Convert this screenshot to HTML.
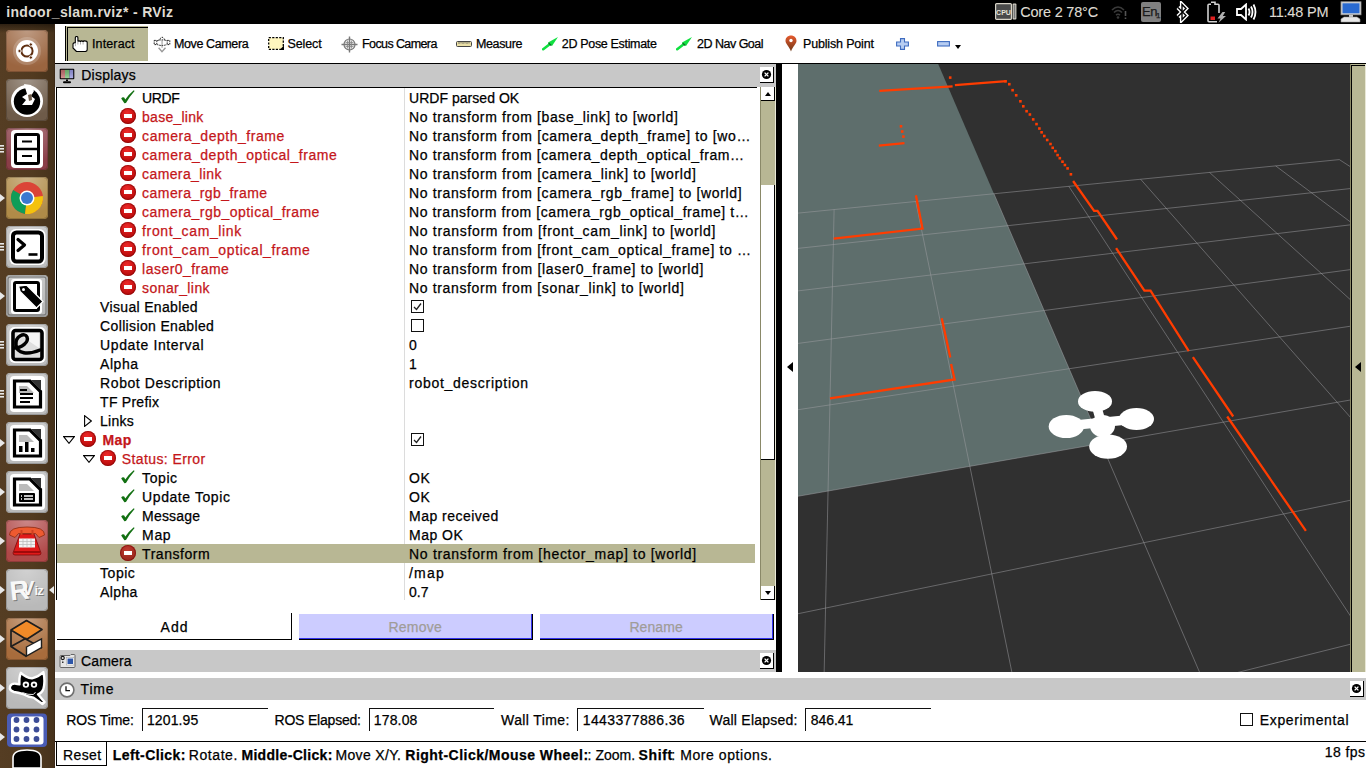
<!DOCTYPE html>
<html><head><meta charset="utf-8">
<style>
*{margin:0;padding:0;box-sizing:border-box}
html,body{width:1366px;height:768px;overflow:hidden;background:#fff;font-family:"Liberation Sans",sans-serif;position:relative}
.a{position:absolute}
.t{position:absolute;white-space:pre;color:#000;-webkit-text-stroke:0.25px currentColor}
.hdr{position:absolute;background:#c8c8c8}
.xb{position:absolute;width:14px;height:16px;background:#fff;border-right:1px solid #000;border-bottom:1px solid #000}
.err{width:16px;height:16px;border-radius:50%;box-shadow:inset 0 0 0 1px rgba(120,0,0,0.55)}
.err i{position:absolute;left:4px;top:6px;width:8px;height:3.5px;background:#fff}
.chk{width:13px;height:13px;border:1px solid #111;background:#fff}
.chk svg{position:absolute;left:0;top:0}
.fld{position:absolute;border-left:1px solid #111;border-top:1px solid #111;height:23px}
</style></head><body>
<!-- top panel -->
<div class="a" style="left:0;top:0;width:1366px;height:24px;background:#000"></div>

<!-- launcher -->
<div class="a" style="left:0;top:24px;width:55px;height:744px;background:linear-gradient(90deg,#553d23,#513a20 60%,#46321b)"></div>
<div class="a" style="left:0;top:24px;width:55px;height:9px;background:linear-gradient(180deg,rgba(0,0,0,0.45),rgba(0,0,0,0))"></div>
<div class="a" style="left:54px;top:24px;width:1px;height:744px;background:#3d2a18"></div>

<!-- toolbar -->
<div class="a" style="left:55px;top:24px;width:1311px;height:39px;background:#fff"></div>
<div class="a" style="left:55px;top:63px;width:1311px;height:1px;background:#000"></div>



<!-- displays header -->
<div class="hdr" style="left:55px;top:64px;width:721px;height:23px"></div>
<div class="xb" style="left:760px;top:67px"><svg width="13" height="15" style="position:absolute;left:0;top:0" viewBox="0 0 13 15"><circle cx="6.5" cy="7.5" r="4.6" fill="#000"/><path d="M4.6 5.6 L8.4 9.4 M8.4 5.6 L4.6 9.4" stroke="#fff" stroke-width="1.3"/></svg></div>

<!-- tree -->
<div class="a" style="left:56px;top:87px;width:701px;height:513px;border-left:1px solid #000;border-top:1px solid #000;background:#fff"></div>
<div class="a" style="left:404px;top:88px;width:1px;height:512px;background:#dcdcdc"></div>

<!-- scrollbar -->
<div class="a" style="left:760px;top:87px;width:16px;height:513px;background:#b8b794;border-left:1px solid #8a8968;border-right:1px solid #e9e8d6"></div>
<div class="a" style="left:761px;top:87px;width:14px;height:14px;background:#fff;border-right:1px solid #000;border-bottom:1px solid #000"></div>
<div class="a" style="left:764.5px;top:92px;width:0;height:0;border-left:3.5px solid transparent;border-right:3.5px solid transparent;border-bottom:4px solid #000"></div>
<div class="a" style="left:761px;top:185px;width:14px;height:275px;background:#fff;border-right:1px solid #000;border-bottom:1px solid #000"></div>
<div class="a" style="left:761px;top:586px;width:14px;height:14px;background:#fff;border-right:1px solid #000;border-bottom:1px solid #000"></div>
<div class="a" style="left:764.5px;top:591px;width:0;height:0;border-left:3.5px solid transparent;border-right:3.5px solid transparent;border-top:4px solid #000"></div>

<!-- splitter -->
<div class="a" style="left:776px;top:64px;width:6px;height:608px;background:#000"></div>
<div class="a" style="left:787px;top:362px;width:0;height:0;border-top:5.5px solid transparent;border-bottom:5.5px solid transparent;border-right:6px solid #000"></div>

<!-- 3d view -->
<div class="a" style="left:798px;top:64px;width:553px;height:608px;background:#303030;overflow:hidden">
<svg class="a" style="left:0;top:0" width="553" height="608" viewBox="0 0 553 608">
<polygon points="0,0 140.2,0 303.3,379.4 0,432.2" fill="#5e6e6c"/>
<path d="M-232.4 172.1L-3771.1 5237.6 M-138.7 162.8L-1895.5 3878.0 M-49.3 154.0L-767.7 3060.5 M36.1 145.5L-14.8 2514.7 M117.8 137.5L523.4 2124.5 M195.9 129.7L927.4 1831.7 M270.8 122.3L1241.8 1603.8 M342.6 115.2L1493.4 1421.4 M411.5 108.4L1699.3 1272.1 M477.7 101.9L1871.0 1147.7 M541.3 95.6L2016.3 1042.4 M-232.4 172.1L541.3 95.6 M-260.6 212.6L581.5 121.4 M-295.3 262.2L628.8 151.7 M-339.0 324.7L685.1 187.9 M-395.5 405.5L753.6 231.8 M-471.5 514.4L838.3 286.2 M-579.3 668.7L946.1 355.4 M-744.2 904.7L1087.6 446.3 M-1027.6 1310.4L1281.9 571.0 M-1629.2 2171.6L1565.1 752.8 M-3771.1 5237.6L2016.3 1042.4" stroke="#a0a0a4" stroke-opacity="0.5" stroke-width="1" fill="none"/>
<path d="M81.3 26.9L154.6 22.4 M156.9 21.2L208.5 17.1 M275.1 117.0L296.1 146.9L299.5 146.9L319.0 175.5 M318.1 184.2L346.4 226.6L352.5 226.6L390.8 287.1 M394.9 293.2L435.2 352.5 M429.2 352.5L507.9 466.8 M80.8 81.6L106.5 79.2 M35.7 174.7L124.5 164.6L117.9 131.2 M143.7 254.3L152.3 293.5 M153.1 300.1L156.6 315.5L32.0 334.4" stroke="#ff3c00" stroke-width="2.3" fill="none" stroke-linejoin="miter"/>
<rect x="150.9" y="12.3" width="2.6" height="2.6" fill="#ff3c00"/>
<rect x="101.7" y="61.0" width="2.6" height="2.6" fill="#ff3c00"/>
<rect x="102.9" y="66.2" width="2.6" height="2.6" fill="#ff3c00"/>
<rect x="104.1" y="71.3" width="2.6" height="2.6" fill="#ff3c00"/>
<rect x="206.2" y="16.0" width="2.6" height="2.6" fill="#ff3c00"/>
<rect x="210.0" y="18.9" width="2.6" height="2.6" fill="#ff3c00"/>
<rect x="213.3" y="24.9" width="2.6" height="2.6" fill="#ff3c00"/>
<rect x="216.9" y="30.0" width="2.6" height="2.6" fill="#ff3c00"/>
<rect x="221.1" y="36.0" width="2.6" height="2.6" fill="#ff3c00"/>
<rect x="224.0" y="41.0" width="2.6" height="2.6" fill="#ff3c00"/>
<rect x="227.3" y="45.9" width="2.6" height="2.6" fill="#ff3c00"/>
<rect x="230.6" y="49.2" width="2.6" height="2.6" fill="#ff3c00"/>
<rect x="233.9" y="54.1" width="2.6" height="2.6" fill="#ff3c00"/>
<rect x="237.2" y="58.8" width="2.6" height="2.6" fill="#ff3c00"/>
<rect x="240.1" y="63.2" width="2.6" height="2.6" fill="#ff3c00"/>
<rect x="242.3" y="67.0" width="2.6" height="2.6" fill="#ff3c00"/>
<rect x="245.0" y="70.7" width="2.6" height="2.6" fill="#ff3c00"/>
<rect x="247.9" y="74.7" width="2.6" height="2.6" fill="#ff3c00"/>
<rect x="251.2" y="78.7" width="2.6" height="2.6" fill="#ff3c00"/>
<rect x="253.4" y="82.5" width="2.6" height="2.6" fill="#ff3c00"/>
<rect x="256.1" y="85.8" width="2.6" height="2.6" fill="#ff3c00"/>
<rect x="258.3" y="89.8" width="2.6" height="2.6" fill="#ff3c00"/>
<rect x="260.5" y="92.9" width="2.6" height="2.6" fill="#ff3c00"/>
<rect x="263.2" y="96.4" width="2.6" height="2.6" fill="#ff3c00"/>
<rect x="265.6" y="99.7" width="2.6" height="2.6" fill="#ff3c00"/>
<rect x="268.3" y="103.1" width="2.6" height="2.6" fill="#ff3c00"/>
<rect x="271.6" y="109.0" width="2.6" height="2.6" fill="#ff3c00"/>
<g fill="#fff"><ellipse cx="297" cy="337.4" rx="17" ry="10.3"/><ellipse cx="338.5" cy="355" rx="17.5" ry="11.1"/><ellipse cx="268.29999999999995" cy="362.5" rx="17.6" ry="11.5"/><ellipse cx="310.0999999999999" cy="382.6" rx="18.9" ry="12.1"/><ellipse cx="304.5" cy="362" rx="12.5" ry="11"/><path d="M297.0 337.0L310.0 382.0M268.0 362.0L338.0 355.0" stroke="#fff" stroke-width="9.5"/></g>
</svg>
</div>
<div class="a" style="left:1350px;top:64px;width:16px;height:608px;background:#b8b794;border-left:1px solid #8c8a68;border-right:1px solid #e9e8d6"></div>
<div class="a" style="left:1351px;top:65px;width:14px;height:607px;border-left:1px solid #000;border-top:1px solid #000"></div>
<div class="a" style="left:1355px;top:362px;width:0;height:0;border-top:5.5px solid transparent;border-bottom:5.5px solid transparent;border-right:6px solid #000"></div>

<div class="a" style="left:57px;top:544px;width:698px;height:19px;background:#b8b794"></div>
<svg class="a" style="left:121px;top:90px" width="14" height="14" viewBox="0 0 14 14"><path d="M0.2 8.6 Q1.4 6.6 3.2 7.6 L4.3 9.6 Q8 4 12.8 0.2 L13.6 1 Q9 6 5 13 L3.4 13.2 Z" fill="#127012"/></svg>
<div class="a err" style="left:120px;top:108px;background:radial-gradient(circle at 45% 30%,#ee2a2a,#c41010 60%,#a00808)"><i></i></div>
<div class="a err" style="left:120px;top:127px;background:radial-gradient(circle at 45% 30%,#ee2a2a,#c41010 60%,#a00808)"><i></i></div>
<div class="a err" style="left:120px;top:146px;background:radial-gradient(circle at 45% 30%,#ee2a2a,#c41010 60%,#a00808)"><i></i></div>
<div class="a err" style="left:120px;top:165px;background:radial-gradient(circle at 45% 30%,#ee2a2a,#c41010 60%,#a00808)"><i></i></div>
<div class="a err" style="left:120px;top:184px;background:radial-gradient(circle at 45% 30%,#ee2a2a,#c41010 60%,#a00808)"><i></i></div>
<div class="a err" style="left:120px;top:203px;background:radial-gradient(circle at 45% 30%,#ee2a2a,#c41010 60%,#a00808)"><i></i></div>
<div class="a err" style="left:120px;top:222px;background:radial-gradient(circle at 45% 30%,#ee2a2a,#c41010 60%,#a00808)"><i></i></div>
<div class="a err" style="left:120px;top:241px;background:radial-gradient(circle at 45% 30%,#ee2a2a,#c41010 60%,#a00808)"><i></i></div>
<div class="a err" style="left:120px;top:260px;background:radial-gradient(circle at 45% 30%,#ee2a2a,#c41010 60%,#a00808)"><i></i></div>
<div class="a err" style="left:120px;top:279px;background:radial-gradient(circle at 45% 30%,#ee2a2a,#c41010 60%,#a00808)"><i></i></div>
<div class="a chk" style="left:411px;top:300px"><svg width="11" height="11" viewBox="0 0 11 11"><path d="M2 6 L4.5 8.5 L9 2.5" fill="none" stroke="#222" stroke-width="1.3"/></svg></div>
<div class="a chk" style="left:411px;top:319px"></div>
<svg class="a" style="left:84px;top:415px" width="8" height="12" viewBox="0 0 8 12"><path d="M0.6 0.6 L7.3 6 L0.6 11.4 Z" fill="none" stroke="#000" stroke-width="1.1"/></svg>
<div class="a err" style="left:80px;top:431px;background:radial-gradient(circle at 45% 30%,#ee2a2a,#c41010 60%,#a00808)"><i></i></div>
<svg class="a" style="left:63px;top:436px" width="12" height="8" viewBox="0 0 12 8"><path d="M0.6 0.6 L11.4 0.6 L6 7.3 Z" fill="none" stroke="#000" stroke-width="1.1"/></svg>
<div class="a chk" style="left:411px;top:433px"><svg width="11" height="11" viewBox="0 0 11 11"><path d="M2 6 L4.5 8.5 L9 2.5" fill="none" stroke="#222" stroke-width="1.3"/></svg></div>
<div class="a err" style="left:100px;top:450px;background:radial-gradient(circle at 45% 30%,#ee2a2a,#c41010 60%,#a00808)"><i></i></div>
<svg class="a" style="left:83px;top:455px" width="12" height="8" viewBox="0 0 12 8"><path d="M0.6 0.6 L11.4 0.6 L6 7.3 Z" fill="none" stroke="#000" stroke-width="1.1"/></svg>
<svg class="a" style="left:121px;top:470px" width="14" height="14" viewBox="0 0 14 14"><path d="M0.2 8.6 Q1.4 6.6 3.2 7.6 L4.3 9.6 Q8 4 12.8 0.2 L13.6 1 Q9 6 5 13 L3.4 13.2 Z" fill="#127012"/></svg>
<svg class="a" style="left:121px;top:489px" width="14" height="14" viewBox="0 0 14 14"><path d="M0.2 8.6 Q1.4 6.6 3.2 7.6 L4.3 9.6 Q8 4 12.8 0.2 L13.6 1 Q9 6 5 13 L3.4 13.2 Z" fill="#127012"/></svg>
<svg class="a" style="left:121px;top:508px" width="14" height="14" viewBox="0 0 14 14"><path d="M0.2 8.6 Q1.4 6.6 3.2 7.6 L4.3 9.6 Q8 4 12.8 0.2 L13.6 1 Q9 6 5 13 L3.4 13.2 Z" fill="#127012"/></svg>
<svg class="a" style="left:121px;top:527px" width="14" height="14" viewBox="0 0 14 14"><path d="M0.2 8.6 Q1.4 6.6 3.2 7.6 L4.3 9.6 Q8 4 12.8 0.2 L13.6 1 Q9 6 5 13 L3.4 13.2 Z" fill="#127012"/></svg>
<div class="a err" style="left:120px;top:545px;background:radial-gradient(circle at 45% 30%,#c03a30,#a02a20 60%,#882018)"><i></i></div>

<!-- buttons -->
<div class="a" style="left:57px;top:613px;width:235px;height:27px;border-right:1px solid #000;border-bottom:1px solid #000"></div>
<div class="a" style="left:299px;top:614px;width:234px;height:26px;background:#ccccff;border-right:1px solid #000;border-bottom:1px solid #000;box-shadow:inset -1px -1px 0 #3333ee"></div>
<div class="a" style="left:540px;top:614px;width:234px;height:26px;background:#ccccff;border-right:1px solid #000;border-bottom:1px solid #000;box-shadow:inset -1px -1px 0 #3333ee"></div>

<!-- camera header -->
<div class="hdr" style="left:55px;top:650px;width:721px;height:22px"></div>
<div class="xb" style="left:760px;top:653px"><svg width="13" height="15" style="position:absolute;left:0;top:0" viewBox="0 0 13 15"><circle cx="6.5" cy="7.5" r="4.6" fill="#000"/><path d="M4.6 5.6 L8.4 9.4 M8.4 5.6 L4.6 9.4" stroke="#fff" stroke-width="1.3"/></svg></div>

<!-- time header -->
<div class="hdr" style="left:55px;top:678px;width:1311px;height:22px"></div>
<div class="xb" style="left:1350px;top:681px"><svg width="13" height="15" style="position:absolute;left:0;top:0" viewBox="0 0 13 15"><circle cx="6.5" cy="7.5" r="4.6" fill="#000"/><path d="M4.6 5.6 L8.4 9.4 M8.4 5.6 L4.6 9.4" stroke="#fff" stroke-width="1.3"/></svg></div>

<!-- time fields -->
<div class="fld" style="left:142px;top:708px;width:126px"></div>
<div class="fld" style="left:369px;top:708px;width:125px"></div>
<div class="fld" style="left:577px;top:708px;width:127px"></div>
<div class="fld" style="left:805px;top:708px;width:126px"></div>
<div class="a chk" style="left:1240px;top:713px"></div>

<!-- status -->
<div class="a" style="left:55px;top:741px;width:1311px;height:1px;background:#000"></div>
<div class="a" style="left:56px;top:742px;width:51px;height:24px;border-left:1px solid #000;border-right:1px solid #000;border-bottom:1px solid #000"></div>

<svg class="a" style="left:0;top:24px" width="55" height="744" viewBox="0 24 55 744">
<defs>
<radialGradient id="shine" cx="0.5" cy="0" r="0.9"><stop offset="0" stop-color="#fff" stop-opacity="0.35"/><stop offset="1" stop-color="#fff" stop-opacity="0"/></radialGradient>
<linearGradient id="gray" x1="0" y1="0" x2="0" y2="1"><stop offset="0" stop-color="#d2d2d2"/><stop offset="1" stop-color="#a8a8a8"/></linearGradient>
</defs>
<rect x="6" y="30" width="42" height="42" rx="4" fill="#9b6540"/>
<rect x="6" y="30" width="42" height="42" rx="4" fill="url(#shine)"/>
<rect x="6.5" y="30.5" width="41" height="41" rx="4" fill="none" stroke="#000" stroke-opacity="0.18"/>
<circle cx="27" cy="51" r="14" fill="#fff" fill-opacity="0.18"/>
<circle cx="27" cy="51" r="11" fill="#fff"/>
<circle cx="27" cy="51" r="5.6" fill="none" stroke="#5e2e10" stroke-width="2"/>
<circle cx="30.8" cy="44.5" r="1.7" fill="#5e2e10" stroke="#fff" stroke-width="1"/>
<circle cx="19.5" cy="51.0" r="1.7" fill="#5e2e10" stroke="#fff" stroke-width="1"/>
<circle cx="30.8" cy="57.5" r="1.7" fill="#5e2e10" stroke="#fff" stroke-width="1"/>
<rect x="6" y="79" width="42" height="42" rx="4" fill="#6e5b49"/>
<rect x="6" y="79" width="42" height="42" rx="4" fill="url(#shine)"/>
<rect x="6.5" y="79.5" width="41" height="41" rx="4" fill="none" stroke="#000" stroke-opacity="0.18"/>
<circle cx="27" cy="101" r="16" fill="#fff"/>
<circle cx="27" cy="101.5" r="13.2" fill="#000"/>
<path d="M24 84 L31 85 L34 91 L31 96 L35 99 L32 105 L22 105 L26 100 L22 97 L27 94 Z" fill="#fff"/>
<path d="M28 95 L31.5 94 L32 100 L29 101 Z" fill="#6e5b49"/>
<rect x="6" y="128" width="42" height="42" rx="4" fill="#8a3e47"/>
<rect x="6" y="128" width="42" height="42" rx="4" fill="url(#shine)"/>
<rect x="6.5" y="128.5" width="41" height="41" rx="4" fill="none" stroke="#000" stroke-opacity="0.18"/>
<rect x="11" y="130" width="32" height="38" rx="4" fill="#fff"/>
<rect x="15.5" y="134.5" width="23" height="29" rx="1.5" fill="none" stroke="#000" stroke-width="3"/>
<path d="M15 149H39" stroke="#000" stroke-width="2.5"/>
<path d="M22 141.5H32M22 156H32" stroke="#000" stroke-width="2"/>
<rect x="0" y="145" width="4" height="1.6" fill="#e8e8e8"/>
<rect x="0" y="148" width="4" height="1.6" fill="#e8e8e8"/>
<rect x="0" y="151" width="4" height="1.6" fill="#e8e8e8"/>
<rect x="6" y="177" width="42" height="42" rx="4" fill="#b08b48"/>
<rect x="6" y="177" width="42" height="42" rx="4" fill="url(#shine)"/>
<rect x="6.5" y="177.5" width="41" height="41" rx="4" fill="none" stroke="#000" stroke-opacity="0.18"/>
<circle cx="27" cy="198" r="16" fill="#db4437"/>
<path d="M27 198 L13.1 190 A16 16 0 0 0 25 213.9 Z" fill="#0f9d58"/>
<path d="M27 198 L42.9 196 A16 16 0 0 1 25 213.9 Z" fill="#f4c20d"/>
<circle cx="27" cy="198" r="7.5" fill="#fff"/>
<circle cx="27" cy="198" r="6" fill="#3b78d0"/>
<path d="M0 194L5 198L0 202Z" fill="#e8e8e8"/>
<rect x="6" y="226" width="42" height="42" rx="4" fill="#bdbdbd"/>
<rect x="6" y="226" width="42" height="42" rx="4" fill="url(#shine)"/>
<rect x="6.5" y="226.5" width="41" height="41" rx="4" fill="none" stroke="#000" stroke-opacity="0.18"/>
<rect x="9.5" y="229" width="36" height="36" rx="6" fill="#fff"/>
<rect x="13" y="232.5" width="29" height="29" rx="3.5" fill="none" stroke="#000" stroke-width="4"/>
<path d="M18 239.5L24.5 245L18 250.5" fill="none" stroke="#000" stroke-width="3.2" stroke-linecap="round" stroke-linejoin="round"/>
<path d="M28.5 254.5H37.5" stroke="#000" stroke-width="2.6"/>
<rect x="0" y="243" width="4" height="1.6" fill="#e8e8e8"/>
<rect x="0" y="246" width="4" height="1.6" fill="#e8e8e8"/>
<rect x="0" y="249" width="4" height="1.6" fill="#e8e8e8"/>
<rect x="6" y="275" width="42" height="42" rx="4" fill="#b8b8b8"/>
<rect x="6" y="275" width="42" height="42" rx="4" fill="url(#shine)"/>
<rect x="6.5" y="275.5" width="41" height="41" rx="4" fill="none" stroke="#000" stroke-opacity="0.18"/>
<rect x="8" y="277" width="38" height="38" rx="2" fill="none" stroke="#666" stroke-width="1"/>
<rect x="11" y="279" width="31" height="35" rx="3" fill="#fff"/>
<rect x="14.5" y="282.5" width="24" height="28" rx="1.5" fill="none" stroke="#000" stroke-width="3"/>
<path d="M18.5 286 L26.5 285 L43 301.5 L36.5 308 L20 291.5 Z" fill="#000" stroke="#fff" stroke-width="1.3" stroke-linejoin="round"/>
<circle cx="23.5" cy="289.5" r="1.5" fill="#fff"/>
<path d="M0 292L5 296L0 300Z" fill="#e8e8e8"/>
<rect x="6" y="324" width="42" height="42" rx="4" fill="#bcbcbc"/>
<rect x="6" y="324" width="42" height="42" rx="4" fill="url(#shine)"/>
<rect x="6.5" y="324.5" width="41" height="41" rx="4" fill="none" stroke="#000" stroke-opacity="0.18"/>
<rect x="9.5" y="327" width="36" height="36" rx="5" fill="#fff"/>
<rect x="13" y="330.5" width="29" height="29" rx="2.5" fill="#dedede" stroke="#000" stroke-width="3.6"/>
<path d="M17 333 H39 V348 Z" fill="#fff" fill-opacity="0.7"/>
<path d="M14 348 C22 348 29 342 27 337 C25 332 15 336 16 345 C17 354 28 355 40 350" fill="none" stroke="#000" stroke-width="3.4" stroke-linecap="round"/>
<rect x="0" y="341" width="4" height="1.6" fill="#e8e8e8"/>
<rect x="0" y="344" width="4" height="1.6" fill="#e8e8e8"/>
<rect x="0" y="347" width="4" height="1.6" fill="#e8e8e8"/>
<rect x="6" y="373" width="42" height="42" rx="4" fill="#bababa"/>
<rect x="6" y="373" width="42" height="42" rx="4" fill="url(#shine)"/>
<rect x="6.5" y="373.5" width="41" height="41" rx="4" fill="none" stroke="#000" stroke-opacity="0.18"/>
<rect x="10" y="376" width="35" height="36" rx="4" fill="#fff"/>
<path d="M14.5 381 H30 L40.5 391.5 V407 H14.5 Z" fill="#fff" stroke="#000" stroke-width="3.2"/>
<path d="M31 380 L41 380 L41 390 Z" fill="#333"/>
<path d="M19 386 H27 L34 393 V393 H19 Z" fill="#bbb"/>
<path d="M20 390H27M20 394H33M20 398H33M20 402H30" stroke="#000" stroke-width="2"/>
<rect x="0" y="390" width="4" height="1.6" fill="#e8e8e8"/>
<rect x="0" y="393" width="4" height="1.6" fill="#e8e8e8"/>
<rect x="0" y="396" width="4" height="1.6" fill="#e8e8e8"/>
<rect x="6" y="422" width="42" height="42" rx="4" fill="#bababa"/>
<rect x="6" y="422" width="42" height="42" rx="4" fill="url(#shine)"/>
<rect x="6.5" y="422.5" width="41" height="41" rx="4" fill="none" stroke="#000" stroke-opacity="0.18"/>
<rect x="10" y="425" width="35" height="36" rx="4" fill="#fff"/>
<path d="M14.5 430 H30 L40.5 440.5 V456 H14.5 Z" fill="#fff" stroke="#000" stroke-width="3.2"/>
<path d="M31 429 L41 429 L41 439 Z" fill="#333"/>
<path d="M19 435 H27 L34 442 V442 H19 Z" fill="#bbb"/>
<rect x="19" y="446" width="3.5" height="6" fill="#000"/><rect x="25" y="442" width="3.5" height="10" fill="#000"/><rect x="31" y="448" width="3.5" height="4" fill="#000"/>
<path d="M0 439L5 443L0 447Z" fill="#e8e8e8"/>
<rect x="6" y="471" width="42" height="42" rx="4" fill="#bababa"/>
<rect x="6" y="471" width="42" height="42" rx="4" fill="url(#shine)"/>
<rect x="6.5" y="471.5" width="41" height="41" rx="4" fill="none" stroke="#000" stroke-opacity="0.18"/>
<rect x="10" y="474" width="35" height="36" rx="4" fill="#fff"/>
<path d="M14.5 479 H30 L40.5 489.5 V505 H14.5 Z" fill="#fff" stroke="#000" stroke-width="3.2"/>
<path d="M31 478 L41 478 L41 488 Z" fill="#333"/>
<path d="M19 484 H27 L34 491 V491 H19 Z" fill="#bbb"/>
<rect x="19" y="493" width="16" height="9" rx="1" fill="#000"/><path d="M24 496H33M24 499H33M21 496H22M21 499H22" stroke="#fff" stroke-width="1.3"/>
<path d="M0 488L5 492L0 496Z" fill="#e8e8e8"/>
<rect x="6" y="520" width="42" height="42" rx="4" fill="#b04848"/>
<rect x="6" y="520" width="42" height="42" rx="4" fill="url(#shine)"/>
<rect x="6.5" y="520.5" width="41" height="41" rx="4" fill="none" stroke="#000" stroke-opacity="0.18"/>
<path d="M20 534 L34 534 L41 553 Q41 555 39 555 L15 555 Q13 555 13 553 Z" fill="#e01a1a" stroke="#7a0a0a" stroke-width="0.8"/>
<path d="M9.5 535 Q9 527 27 527 Q45 527 44.5 535 L39 537.5 L35.5 533.5 L18.5 533.5 L15 537.5 Z" fill="#ee5a30" stroke="#8a2a10" stroke-width="0.8"/>
<rect x="20.5" y="530" width="2" height="5" fill="#d04020"/><rect x="31.5" y="530" width="2" height="5" fill="#d04020"/>
<rect x="19" y="538.5" width="16" height="9" fill="#f2f2f2"/>
<path d="M19 541.5 H35 M19 544.5 H35 M23 538.5 V547.5 M27 538.5 V547.5 M31 538.5 V547.5" stroke="#b8b8b8" stroke-width="0.7"/>
<path d="M14 552 H40" stroke="#a00a0a" stroke-width="2"/>
<path d="M0 537L5 541L0 545Z" fill="#e8e8e8"/>
<rect x="6" y="569" width="42" height="42" rx="4" fill="#b9b9b9"/>
<rect x="6" y="569" width="42" height="42" rx="4" fill="url(#shine)"/>
<rect x="6.5" y="569.5" width="41" height="41" rx="4" fill="none" stroke="#000" stroke-opacity="0.18"/>
<g font-family="Liberation Sans" font-weight="bold" fill="#7a7a7a"><text x="10.5" y="601" font-size="27" transform="rotate(-6 15 589)">R</text><text x="22" y="596" font-size="20">V</text><text x="35.5" y="596" font-size="13" letter-spacing="-0.8">iz</text></g>
<g font-family="Liberation Sans" font-weight="bold" fill="#f8f8f8"><text x="9.5" y="600" font-size="27" transform="rotate(-6 15 589)">R</text><text x="21" y="595" font-size="20">V</text><text x="34.5" y="595" font-size="13" letter-spacing="-0.8">iz</text></g>
<path d="M0 586L5 590L0 594Z" fill="#e8e8e8"/>
<path d="M54 586L49 590L54 594Z" fill="#e8e8e8"/>
<rect x="6" y="618" width="42" height="42" rx="4" fill="#a86c3c"/>
<rect x="6" y="618" width="42" height="42" rx="4" fill="url(#shine)"/>
<rect x="6.5" y="618.5" width="41" height="41" rx="4" fill="none" stroke="#000" stroke-opacity="0.18"/>
<path d="M11 630 L26.5 620.5 L42 629.5 L26.5 639.5 Z" fill="#f08a28"/>
<path d="M11 630 L26.5 620.5 L42 629.5 L26.5 639.5 Z M11 630 V646.5 L26.5 656.5 M26.5 639.5 L42 648 M11 646.5 L26.5 638" fill="none" stroke="#1e1e1e" stroke-width="1.7" stroke-linejoin="round"/>
<path d="M26.5 647 L41.5 639 V647.5 L26.5 656 Z" fill="#fff" stroke="#1e1e1e" stroke-width="1.4"/>
<path d="M0 635L5 639L0 643Z" fill="#e8e8e8"/>
<rect x="6" y="667" width="42" height="42" rx="4" fill="#b9b9b9"/>
<rect x="6" y="667" width="42" height="42" rx="4" fill="url(#shine)"/>
<rect x="6.5" y="667.5" width="41" height="41" rx="4" fill="none" stroke="#000" stroke-opacity="0.18"/>
<path d="M20.9 672.8 Q26 677.5 32 678.4 Q38 677 43.4 672.1 Q45.5 682 43.4 689 Q41.5 693.5 38 694.3 L44.6 702 L42.4 704 L33.5 697.6 Q28 697 22.8 694 Q18 692.5 14 692 Q9 690.5 10 686.5 Q11.5 682.5 17.5 684 L19.4 684.4 Q19 677 20.9 672.8 Z" fill="#000" stroke="#fff" stroke-width="2.4" stroke-linejoin="round"/>
<circle cx="25.9" cy="684.6" r="3.2" fill="#fff"/><circle cx="34" cy="684.6" r="3.2" fill="#fff"/>
<circle cx="25.9" cy="684.8" r="1.4" fill="#000"/><circle cx="34" cy="684.8" r="1.4" fill="#000"/>
<path d="M22.5 692.6 Q28 695 33.5 694.5" fill="none" stroke="#fff" stroke-width="0.9"/>
<path d="M33.5 694 L35.5 692.5" stroke="#fff" stroke-width="1"/>
<path d="M0 684L5 688L0 692Z" fill="#e8e8e8"/>
<rect x="7" y="713.5" width="40" height="33.5" rx="4" fill="#4a5cb4"/>
<rect x="11" y="716.5" width="32.5" height="28" rx="3" fill="#fff"/>
<circle cx="16.5" cy="720.0" r="2.9" fill="#3c4c96"/>
<circle cx="16.5" cy="729.5" r="2.9" fill="#3c4c96"/>
<circle cx="16.5" cy="739.0" r="2.9" fill="#3c4c96"/>
<circle cx="26.5" cy="720.0" r="2.9" fill="#3c4c96"/>
<circle cx="26.5" cy="729.5" r="2.9" fill="#3c4c96"/>
<circle cx="26.5" cy="739.0" r="2.9" fill="#3c4c96"/>
<circle cx="36.5" cy="720.0" r="2.9" fill="#3c4c96"/>
<circle cx="36.5" cy="729.5" r="2.9" fill="#3c4c96"/>
<circle cx="36.5" cy="739.0" r="2.9" fill="#3c4c96"/>
<path d="M13 758 Q13 750 27 750 Q41 750 41 758 V768 H13 Z" fill="#000" stroke="#fff" stroke-width="1.6"/>
<path d="M0 733L5 737L0 741Z" fill="#e8e8e8"/>
</svg>
<div class="a" style="left:65px;top:26px;width:83px;height:35px;background:#b8b794"></div>
<div class="a" style="left:65px;top:26px;width:1px;height:35px;background:#000"></div>
<div class="a" style="left:67px;top:27px;width:81px;height:34px;border-left:1px solid #000;border-top:1px solid #000"></div>
<svg class="a" style="left:72px;top:36px" width="16" height="16" viewBox="0 0 16 16"><path d="M4.5 15.5 L1 12 V8.2 Q1 6.6 3.3 6.6 V1.8 Q3.3 0.5 4.6 0.5 Q5.9 0.5 5.9 1.8 V5.6 Q6 4.9 7.2 4.9 Q8.5 4.9 8.5 5.9 Q8.6 4.9 9.8 4.9 Q11.1 4.9 11.1 5.9 Q11.2 4.9 12.4 4.9 Q15.2 4.9 15.2 6.6 V13.5 Q15.2 15.5 13.2 15.5 Z" fill="#fff" stroke="#000" stroke-width="1.1"/><path d="M3.4 7.2 V10.2 M5.9 5.8 V8.5 M8.5 6 V8.5 M11.1 6 V8.5" stroke="#888" stroke-width="0.7"/></svg>
<svg class="a" style="left:153px;top:36px" width="18" height="17" viewBox="0 0 18 17"><rect x="8.2" y="4" width="1.8" height="8" fill="#c4c4c4"/><path d="M5.3 4.4 L9 0.9 L12.8 4.4 M3.8 4.8 Q9 2.8 14.2 4.8 M3.8 8.4 Q9 10.6 14.2 8.4" fill="none" stroke="#222" stroke-width="1" stroke-dasharray="1.6 0.9"/><rect x="1.2" y="4.4" width="2.6" height="4.2" fill="#fff" stroke="#222" stroke-width="1" stroke-dasharray="1.6 0.9"/><rect x="14.2" y="4.4" width="2.6" height="4.2" fill="#fff" stroke="#222" stroke-width="1" stroke-dasharray="1.6 0.9"/><path d="M5.6 11.8 L9 15.6 L12.5 11.8" fill="#fff" stroke="#999" stroke-width="1.4"/></svg>
<svg class="a" style="left:268px;top:37px" width="16" height="13" viewBox="0 0 16 13"><rect x="0.7" y="0.7" width="14.6" height="11.6" fill="#fff6bf" stroke="#000" stroke-width="1.3" stroke-dasharray="2.2 1.3"/><path d="M16 8.5 V13 H11.5 Z" fill="#000"/></svg>
<svg class="a" style="left:341px;top:36px" width="17" height="17" viewBox="0 0 17 17"><circle cx="8.5" cy="8.5" r="5.5" fill="#eee" stroke="#777" stroke-width="1.2"/><path d="M8.5 0.5 V16.5 M0.5 8.5 H16.5" stroke="#777" stroke-width="1.4"/><path d="M4.5 6.5 H12.5 M4.5 10.5 H12.5 M6.5 4.5 V12.5 M10.5 4.5 V12.5" stroke="#888" stroke-width="0.8"/></svg>
<svg class="a" style="left:456px;top:41px" width="16" height="6" viewBox="0 0 16 6"><rect x="0.5" y="0.5" width="15" height="5" rx="1" fill="#eadfa6" stroke="#444" stroke-width="1"/><path d="M3 1 V3 M5 1 V2.5 M7 1 V3 M9 1 V2.5 M11 1 V3 M13 1 V2.5" stroke="#555" stroke-width="0.8"/></svg>
<svg class="a" style="left:541.5px;top:36px" width="17" height="15" viewBox="0 0 17 15"><path d="M1.2 13.2 L8 8" stroke="#10e040" stroke-width="2.6" stroke-linecap="round"/><path d="M6 6.5 L16 1 L10 10 Z" fill="#10e040"/><path d="M6.5 7 L9.3 9.5" stroke="#066a20" stroke-width="1.2"/></svg>
<svg class="a" style="left:676.4px;top:36px" width="17" height="15" viewBox="0 0 17 15"><path d="M1.2 13.2 L8 8" stroke="#10e040" stroke-width="2.6" stroke-linecap="round"/><path d="M6 6.5 L16 1 L10 10 Z" fill="#10e040"/><path d="M6.5 7 L9.3 9.5" stroke="#066a20" stroke-width="1.2"/></svg>
<svg class="a" style="left:785px;top:35px" width="12" height="17" viewBox="0 0 12 17"><defs><linearGradient id="pg" x1="0" y1="0" x2="0" y2="1"><stop offset="0" stop-color="#e65a2e"/><stop offset="1" stop-color="#6e3818"/></linearGradient></defs><path d="M6 16.5 C4 11 0.5 9 0.5 5.8 C0.5 2.6 3 0.5 6 0.5 C9 0.5 11.5 2.6 11.5 5.8 C11.5 9 8 11 6 16.5 Z" fill="url(#pg)"/><circle cx="6" cy="5.5" r="1.7" fill="#fff"/></svg>
<svg class="a" style="left:896px;top:38px" width="13" height="12" viewBox="0 0 13 12"><path d="M4.5 0.6 H8.5 V4 H12.4 V8 H8.5 V11.4 H4.5 V8 H0.6 V4 H4.5 Z" fill="#b7cdf2" stroke="#3f6cc0" stroke-width="1.1"/></svg>
<svg class="a" style="left:937px;top:41px" width="13" height="6" viewBox="0 0 13 6"><rect x="0.6" y="0.6" width="11.8" height="4.4" fill="#b7cdf2" stroke="#3f6cc0" stroke-width="1.1"/></svg>
<div class="a" style="left:955px;top:44.5px;width:0;height:0;border-left:3.5px solid transparent;border-right:3.5px solid transparent;border-top:4.5px solid #000"></div>
<svg class="a" style="left:59px;top:68px" width="16" height="16" viewBox="0 0 16 16"><defs><linearGradient id="mg" x1="0" y1="0" x2="0" y2="1"><stop offset="0" stop-color="#000" stop-opacity="0.15"/><stop offset="1" stop-color="#fff" stop-opacity="0.25"/></linearGradient></defs><rect x="0.7" y="0.7" width="14.6" height="10.6" rx="1" fill="#000"/><rect x="1.8" y="1.8" width="4.2" height="8.4" fill="#c87272"/><rect x="6" y="1.8" width="4.5" height="8.4" fill="#7ac47a"/><rect x="10.5" y="1.8" width="3.7" height="8.4" fill="#9a9ae6"/><rect x="1.8" y="1.8" width="12.4" height="8.4" fill="url(#mg)"/><path d="M7 11.5 H9 V13 H7 Z" fill="#000"/><rect x="4" y="13.2" width="8" height="2" rx="1" fill="#000"/></svg>
<svg class="a" style="left:59px;top:653px" width="17" height="16" viewBox="0 0 17 16"><path d="M1 3.5 Q1 2.5 2 2.5 H11 L12 1.5 H15.5 Q16 1.5 16 2.5 V13.5 Q16 14.5 15 14.5 H2 Q1 14.5 1 13.5 Z" fill="#e6e6e6" stroke="#666" stroke-width="1"/><rect x="7.5" y="4.5" width="7.5" height="7.5" fill="#fff" stroke="#999" stroke-width="0.5"/><rect x="8.5" y="5.5" width="5.5" height="5.5" fill="#2e56a8"/><circle cx="3.7" cy="5" r="1.6" fill="none" stroke="#111" stroke-width="1.1"/><rect x="3" y="8.5" width="1.5" height="1.5" fill="#333"/></svg>
<svg class="a" style="left:59px;top:682px" width="16" height="16" viewBox="0 0 16 16"><circle cx="8" cy="8" r="6.9" fill="#fff" stroke="#707070" stroke-width="1.6"/><path d="M7 4.2 V8.6 H11" fill="none" stroke="#111" stroke-width="1.3"/></svg>
<svg class="a" style="left:995px;top:3px" width="22" height="17" viewBox="0 0 22 17"><rect x="0.6" y="0.6" width="15.8" height="15.8" rx="1" fill="#4a4a4a" stroke="#d8d4c8" stroke-width="1.2"/><text x="8.5" y="11.5" font-family="Liberation Sans" font-weight="bold" font-size="7" fill="#e8e4d8" text-anchor="middle">CPU</text><rect x="17.6" y="0.6" width="3.8" height="15.8" rx="1" fill="#d8d4c8"/><rect x="18.6" y="1.6" width="1.8" height="13.8" fill="#777"/></svg>
<svg class="a" style="left:1111px;top:5px" width="16" height="15" viewBox="0 0 16 15"><path d="M1 5 Q7 -1 13 5 M3 7.5 Q7 3.5 11 7.5 M5 10 Q7 8.5 9 10" fill="none" stroke="#3a3a3a" stroke-width="1.6"/><circle cx="7" cy="12.5" r="1.3" fill="#3a3a3a"/><path d="M14.5 6 V11 M14.5 12.5 V14" stroke="#555" stroke-width="1.6"/></svg>
<div class="a" style="left:1141px;top:2px;width:20px;height:20px;background:#808080;border-radius:2px"></div>
<div class="t" style="left:1142px;top:5px;font-size:13px;line-height:13px;color:#1a1a1a;letter-spacing:-0.5px">En</div><div class="t" style="left:1156px;top:12px;font-size:8px;line-height:8px;color:#1a1a1a">1</div>
<svg class="a" style="left:1175px;top:1px" width="15" height="22" viewBox="0 0 15 22"><path d="M3 6.5 L11 14.5 L7 18.5 V3.5 L11 7.5 L3 15.5" fill="none" stroke="#fff" stroke-width="4.2"/><path d="M3 6.5 L11 14.5 L7 18.5 V3.5 L11 7.5 L3 15.5" fill="none" stroke="#000" stroke-width="1.4"/></svg>
<svg class="a" style="left:1206px;top:1px" width="21" height="22" viewBox="0 0 21 22"><path d="M5 1.2 H9 V3.2 H12 Q13 3.2 13 4.2 V12 M11 20.8 H3 Q2 20.8 2 19.8 V4.2 Q2 3.2 3 3.2 H5" fill="none" stroke="#d0d0d0" stroke-width="1.6"/><rect x="4.5" y="15.5" width="4.5" height="3.5" fill="#e02020"/><path d="M16.5 11 L11.5 17.5 H14.5 L12.5 21.8 L20 15 H16.8 L19.2 11 Z" fill="#b0b0b0"/></svg>
<svg class="a" style="left:1236px;top:3px" width="21" height="18" viewBox="0 0 21 18"><path d="M1 6 H5 L10 1.5 V16.5 L5 12 H1 Z" fill="none" stroke="#fff" stroke-width="1.8"/><path d="M12.5 5.5 Q14.5 9 12.5 12.5 M15 3.5 Q18 9 15 14.5 M17.5 1.5 Q21.5 9 17.5 16.5" fill="none" stroke="#fff" stroke-width="1.8"/></svg>
<svg class="a" style="left:1340px;top:1px" width="22" height="22" viewBox="0 0 22 22"><rect x="1" y="0.8" width="20" height="13" fill="#d8d8d8" stroke="#999" stroke-width="0.8"/><rect x="2.5" y="2.3" width="17" height="10" fill="#2a6ad0"/><path d="M9 13.8 H13 V16 H9 Z" fill="#ccc"/><path d="M1 18 L4 16 H17 L20 18 V21 H1 Z" fill="#e8e8e8" stroke="#999" stroke-width="0.6"/></svg>
<div class="t" style="left:6.2px;top:4px;font-size:14px;line-height:16px;letter-spacing:0.340px;color:#dfdbd2;font-weight:bold;-webkit-text-stroke:0">indoor_slam.rviz* - RViz</div>
<div class="t" style="left:1020.2px;top:4px;font-size:14.5px;line-height:16px;letter-spacing:-0.195px;color:#dfdbd2;-webkit-text-stroke:0.1px #dfdbd2">Core 2 78°C</div>
<div class="t" style="left:1268.9px;top:4px;font-size:14.5px;line-height:16px;letter-spacing:-0.200px;color:#dfdbd2;-webkit-text-stroke:0.1px #dfdbd2">11:48 PM</div>
<div class="t" style="left:92.0px;top:37px;font-size:12.5px;line-height:14px;letter-spacing:0.130px;color:#000">Interact</div>
<div class="t" style="left:173.9px;top:37px;font-size:12.5px;line-height:14px;letter-spacing:-0.370px;color:#000">Move Camera</div>
<div class="t" style="left:287.5px;top:37px;font-size:12.5px;line-height:14px;letter-spacing:-0.110px;color:#000">Select</div>
<div class="t" style="left:362.0px;top:37px;font-size:12.5px;line-height:14px;letter-spacing:-0.599px;color:#000">Focus Camera</div>
<div class="t" style="left:475.9px;top:37px;font-size:12.5px;line-height:14px;letter-spacing:-0.340px;color:#000">Measure</div>
<div class="t" style="left:561.8px;top:37px;font-size:12.5px;line-height:14px;letter-spacing:-0.330px;color:#000">2D Pose Estimate</div>
<div class="t" style="left:697.1px;top:37px;font-size:12.5px;line-height:14px;letter-spacing:-0.516px;color:#000">2D Nav Goal</div>
<div class="t" style="left:803.0px;top:37px;font-size:12.5px;line-height:14px;letter-spacing:-0.164px;color:#000">Publish Point</div>
<div class="t" style="left:81.2px;top:67px;font-size:14px;line-height:16px;letter-spacing:0.242px;color:#000">Displays</div>
<div class="t" style="left:81.0px;top:653px;font-size:14px;line-height:16px;letter-spacing:0.141px;color:#000">Camera</div>
<div class="t" style="left:80.6px;top:681px;font-size:14px;line-height:16px;letter-spacing:0.802px;color:#000">Time</div>
<div class="t" style="left:142.1px;top:90px;font-size:14px;line-height:16px;letter-spacing:-0.397px;color:#000">URDF</div>
<div class="t" style="left:409.0px;top:90px;font-size:14px;line-height:16px;letter-spacing:0.038px;color:#000">URDF parsed OK</div>
<div class="t" style="left:142.1px;top:109px;font-size:14px;line-height:16px;letter-spacing:0.243px;color:#c4161a">base_link</div>
<div class="t" style="left:409.0px;top:109px;font-size:14px;line-height:16px;letter-spacing:0.628px;color:#000">No transform from [base_link] to [world]</div>
<div class="t" style="left:142.1px;top:128px;font-size:14px;line-height:16px;letter-spacing:0.537px;color:#c4161a">camera_depth_frame</div>
<div class="t" style="left:409.0px;top:128px;font-size:14px;line-height:16px;letter-spacing:0.636px;color:#000">No transform from [camera_depth_frame] to [wo…</div>
<div class="t" style="left:142.1px;top:147px;font-size:14px;line-height:16px;letter-spacing:0.530px;color:#c4161a">camera_depth_optical_frame</div>
<div class="t" style="left:409.0px;top:147px;font-size:14px;line-height:16px;letter-spacing:0.613px;color:#000">No transform from [camera_depth_optical_fram…</div>
<div class="t" style="left:142.1px;top:166px;font-size:14px;line-height:16px;letter-spacing:0.382px;color:#c4161a">camera_link</div>
<div class="t" style="left:409.0px;top:166px;font-size:14px;line-height:16px;letter-spacing:0.638px;color:#000">No transform from [camera_link] to [world]</div>
<div class="t" style="left:142.1px;top:185px;font-size:14px;line-height:16px;letter-spacing:0.448px;color:#c4161a">camera_rgb_frame</div>
<div class="t" style="left:409.0px;top:185px;font-size:14px;line-height:16px;letter-spacing:0.634px;color:#000">No transform from [camera_rgb_frame] to [world]</div>
<div class="t" style="left:142.1px;top:204px;font-size:14px;line-height:16px;letter-spacing:0.468px;color:#c4161a">camera_rgb_optical_frame</div>
<div class="t" style="left:409.0px;top:204px;font-size:14px;line-height:16px;letter-spacing:0.587px;color:#000">No transform from [camera_rgb_optical_frame] t…</div>
<div class="t" style="left:142.1px;top:223px;font-size:14px;line-height:16px;letter-spacing:0.619px;color:#c4161a">front_cam_link</div>
<div class="t" style="left:409.0px;top:223px;font-size:14px;line-height:16px;letter-spacing:0.686px;color:#000">No transform from [front_cam_link] to [world]</div>
<div class="t" style="left:142.1px;top:242px;font-size:14px;line-height:16px;letter-spacing:0.619px;color:#c4161a">front_cam_optical_frame</div>
<div class="t" style="left:409.0px;top:242px;font-size:14px;line-height:16px;letter-spacing:0.638px;color:#000">No transform from [front_cam_optical_frame] to …</div>
<div class="t" style="left:142.1px;top:261px;font-size:14px;line-height:16px;letter-spacing:0.463px;color:#c4161a">laser0_frame</div>
<div class="t" style="left:409.0px;top:261px;font-size:14px;line-height:16px;letter-spacing:0.655px;color:#000">No transform from [laser0_frame] to [world]</div>
<div class="t" style="left:142.1px;top:280px;font-size:14px;line-height:16px;letter-spacing:0.408px;color:#c4161a">sonar_link</div>
<div class="t" style="left:409.0px;top:280px;font-size:14px;line-height:16px;letter-spacing:0.645px;color:#000">No transform from [sonar_link] to [world]</div>
<div class="t" style="left:100.1px;top:299px;font-size:14px;line-height:16px;letter-spacing:0.334px;color:#000">Visual Enabled</div>
<div class="t" style="left:100.1px;top:318px;font-size:14px;line-height:16px;letter-spacing:0.351px;color:#000">Collision Enabled</div>
<div class="t" style="left:100.1px;top:337px;font-size:14px;line-height:16px;letter-spacing:0.610px;color:#000">Update Interval</div>
<div class="t" style="left:409.0px;top:337px;font-size:14px;line-height:16px;letter-spacing:0.000px;color:#000">0</div>
<div class="t" style="left:100.1px;top:356px;font-size:14px;line-height:16px;letter-spacing:0.522px;color:#000">Alpha</div>
<div class="t" style="left:409.0px;top:356px;font-size:14px;line-height:16px;letter-spacing:0.000px;color:#000">1</div>
<div class="t" style="left:100.1px;top:375px;font-size:14px;line-height:16px;letter-spacing:0.576px;color:#000">Robot Description</div>
<div class="t" style="left:409.0px;top:375px;font-size:14px;line-height:16px;letter-spacing:0.731px;color:#000">robot_description</div>
<div class="t" style="left:100.1px;top:394px;font-size:14px;line-height:16px;letter-spacing:0.252px;color:#000">TF Prefix</div>
<div class="t" style="left:100.1px;top:413px;font-size:14px;line-height:16px;letter-spacing:0.228px;color:#000">Links</div>
<div class="t" style="left:102.4px;top:432px;font-size:14px;line-height:16px;letter-spacing:0.500px;color:#c4161a;font-weight:bold">Map</div>
<div class="t" style="left:121.8px;top:451px;font-size:14px;line-height:16px;letter-spacing:0.392px;color:#c4161a">Status: Error</div>
<div class="t" style="left:142.1px;top:470px;font-size:14px;line-height:16px;letter-spacing:0.578px;color:#000">Topic</div>
<div class="t" style="left:409.0px;top:470px;font-size:14px;line-height:16px;letter-spacing:0.566px;color:#000">OK</div>
<div class="t" style="left:142.1px;top:489px;font-size:14px;line-height:16px;letter-spacing:0.576px;color:#000">Update Topic</div>
<div class="t" style="left:409.0px;top:489px;font-size:14px;line-height:16px;letter-spacing:0.566px;color:#000">OK</div>
<div class="t" style="left:142.1px;top:508px;font-size:14px;line-height:16px;letter-spacing:0.181px;color:#000">Message</div>
<div class="t" style="left:409.0px;top:508px;font-size:14px;line-height:16px;letter-spacing:0.478px;color:#000">Map received</div>
<div class="t" style="left:142.1px;top:527px;font-size:14px;line-height:16px;letter-spacing:0.633px;color:#000">Map</div>
<div class="t" style="left:409.0px;top:527px;font-size:14px;line-height:16px;letter-spacing:0.488px;color:#000">Map OK</div>
<div class="t" style="left:142.1px;top:546px;font-size:14px;line-height:16px;letter-spacing:0.540px;color:#000">Transform</div>
<div class="t" style="left:409.0px;top:546px;font-size:14px;line-height:16px;letter-spacing:0.703px;color:#000">No transform from [hector_map] to [world]</div>
<div class="t" style="left:100.1px;top:565px;font-size:14px;line-height:16px;letter-spacing:0.503px;color:#000">Topic</div>
<div class="t" style="left:409.0px;top:565px;font-size:14px;line-height:16px;letter-spacing:1.225px;color:#000">/map</div>
<div class="t" style="left:100.1px;top:584px;font-size:14px;line-height:16px;letter-spacing:0.372px;color:#000">Alpha</div>
<div class="t" style="left:409.0px;top:584px;font-size:14px;line-height:16px;letter-spacing:0.000px;color:#000">0.7</div>
<div class="t" style="left:160.5px;top:619px;font-size:14px;line-height:16px;letter-spacing:1.039px;color:#000">Add</div>
<div class="t" style="left:388.4px;top:619px;font-size:14px;line-height:16px;letter-spacing:0.252px;color:#a09c98">Remove</div>
<div class="t" style="left:629.4px;top:619px;font-size:14px;line-height:16px;letter-spacing:0.076px;color:#a09c98">Rename</div>
<div class="t" style="left:66.2px;top:712px;font-size:14px;line-height:16px;letter-spacing:-0.096px;color:#000">ROS Time:</div>
<div class="t" style="left:146.9px;top:712px;font-size:14px;line-height:16px;letter-spacing:0.132px;color:#000">1201.95</div>
<div class="t" style="left:274.5px;top:712px;font-size:14px;line-height:16px;letter-spacing:-0.202px;color:#000">ROS Elapsed:</div>
<div class="t" style="left:373.8px;top:712px;font-size:14px;line-height:16px;letter-spacing:0.154px;color:#000">178.08</div>
<div class="t" style="left:501.1px;top:712px;font-size:14px;line-height:16px;letter-spacing:0.386px;color:#000">Wall Time:</div>
<div class="t" style="left:582.8px;top:712px;font-size:14px;line-height:16px;letter-spacing:0.373px;color:#000">1443377886.36</div>
<div class="t" style="left:709.6px;top:712px;font-size:14px;line-height:16px;letter-spacing:0.227px;color:#000">Wall Elapsed:</div>
<div class="t" style="left:810.8px;top:712px;font-size:14px;line-height:16px;letter-spacing:-0.046px;color:#000">846.41</div>
<div class="t" style="left:1259.8px;top:712px;font-size:14px;line-height:16px;letter-spacing:0.645px;color:#000">Experimental</div>
<div class="t" style="left:63.0px;top:747px;font-size:14px;line-height:16px;letter-spacing:0.405px;color:#000">Reset</div>
<div class="t" style="left:112.8px;top:747px;font-size:14px;line-height:16px;letter-spacing:0.405px;color:#000;font-weight:bold">Left-Click:</div>
<div class="t" style="left:188.7px;top:747px;font-size:14px;line-height:16px;letter-spacing:0.593px;color:#000">Rotate.</div>
<div class="t" style="left:241.4px;top:747px;font-size:14px;line-height:16px;letter-spacing:0.323px;color:#000;font-weight:bold">Middle-Click:</div>
<div class="t" style="left:335.5px;top:747px;font-size:14px;line-height:16px;letter-spacing:0.327px;color:#000">Move X/Y.</div>
<div class="t" style="left:405.3px;top:747px;font-size:14px;line-height:16px;letter-spacing:0.474px;color:#000;font-weight:bold">Right-Click/Mouse Wheel:</div>
<div class="t" style="left:587.6px;top:747px;font-size:14px;line-height:16px;letter-spacing:0.022px;color:#000">: Zoom.</div>
<div class="t" style="left:638.6px;top:747px;font-size:14px;line-height:16px;letter-spacing:0.598px;color:#000;font-weight:bold">Shift</div>
<div class="t" style="left:671.3px;top:747px;font-size:14px;line-height:16px;letter-spacing:0.571px;color:#000">: More options.</div>
<div class="t" style="left:1324.8px;top:744px;font-size:14px;line-height:16px;letter-spacing:0.392px;color:#000">18 fps</div>
</body></html>
